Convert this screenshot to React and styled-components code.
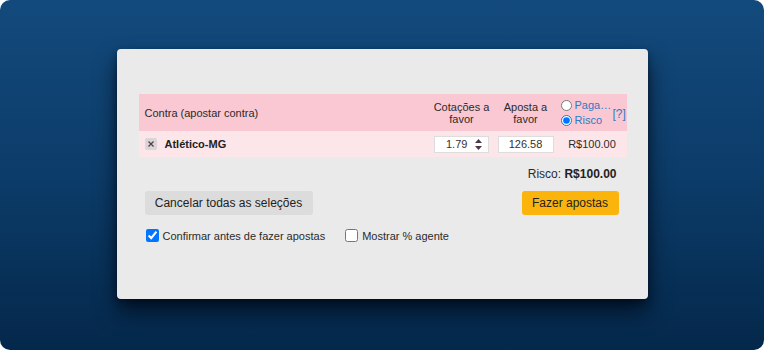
import React, { useState } from 'react';
import styled, { createGlobalStyle } from 'styled-components';

const GlobalStyle = createGlobalStyle`
  * { box-sizing: border-box; }
  html, body { margin: 0; padding: 0; background: #fff; }
  body { font-family: "Liberation Sans", Arial, sans-serif; }
`;

const Backdrop = styled.div`
  width: 764px;
  height: 350px;
  border-radius: 10px;
  background: linear-gradient(180deg, #134a7d 0%, #0c3c69 50%, #04284b 100%);
  display: flex;
  justify-content: center;
  padding-top: 49px;
`;

const Card = styled.div`
  width: 531px;
  height: 250px;
  background: #eaeaea;
  border-radius: 4px;
  box-shadow: 0 12px 22px rgba(0, 0, 10, 0.65), 0 3px 6px rgba(0, 0, 0, 0.35);
  padding: 45px 21px 0 22px;
  color: #2b2b2b;
  font-size: 11px;
`;

const Row = styled.div`
  display: flex;
  align-items: center;
  height: ${p => p.$h}px;
  background: ${p => p.$bg};
`;

const NameCell = styled.div`
  flex: 1;
  padding-left: 6px;
  display: flex;
  align-items: center;
  gap: 8px;
`;

const ColCell = styled.div`
  width: ${p => p.$w}px;
  display: flex;
  justify-content: ${p => p.$justify || 'center'};
  align-items: center;
  text-align: center;
  line-height: 12px;
  padding: ${p => p.$pad || 0};
`;

const RemoveBtn = styled.button`
  width: 12px;
  height: 12px;
  border: 0;
  border-radius: 2px;
  background: #d9d6d7;
  padding: 0;
  display: flex;
  align-items: center;
  justify-content: center;
`;

const Team = styled.span`
  font-weight: bold;
  color: #222;
`;

const InputBox = styled.div`
  width: ${p => p.$w}px;
  height: 17px;
  background: #fff;
  border: 1px solid #ddd;
  display: flex;
  align-items: center;
  justify-content: ${p => (p.$spin ? 'flex-start' : 'center')};
  padding: ${p => (p.$spin ? '0 0 0 11px' : '0')};
  color: #333;
`;

const Spinner = styled.svg`
  margin-left: auto;
  margin-right: 6px;
`;

const RadioStack = styled.div`
  display: flex;
  flex-direction: column;
  gap: 2px;
  width: 53px;
`;

const RadioLabel = styled.label`
  display: flex;
  align-items: center;
  color: #2e7bc4;
  font-size: 11px;
  line-height: 13px;
  white-space: nowrap;
  overflow: hidden;

  input {
    width: 11px;
    height: 11px;
    margin: 0 3px 0 1px;
    flex-shrink: 0;
  }

  span {
    overflow: hidden;
    text-overflow: ellipsis;
  }
`;

const Help = styled.span`
  color: #2e7bc4;
  font-size: 12px;
  margin-top: 2px;
`;

const Footer = styled.div`
  padding: 0 8px 0 6px;
`;

const RiskLine = styled.div`
  text-align: right;
  margin-top: 10px;
  padding-right: 2px;
  line-height: 14px;
  font-size: 12px;
  b { color: #222; }
`;

const ButtonRow = styled.div`
  display: flex;
  justify-content: space-between;
  margin-top: 10px;
`;

const Button = styled.button`
  height: 24px;
  border: 0;
  border-radius: 3px;
  padding: 0;
  white-space: nowrap;
  font-family: inherit;
  font-size: 12px;
  color: #222;
  background: ${p => (p.$primary ? '#fbb40b' : '#dcdcdc')};
  width: ${p => p.$w}px;
`;

const Options = styled.div`
  display: flex;
  gap: 19px;
  margin-top: 14px;
`;

const CheckLabel = styled.label`
  display: flex;
  align-items: center;
  gap: 4px;

  input {
    width: 13px;
    height: 13px;
    margin: 0 0 0 1px;
  }
`;

export default function App() {
  const [mode, setMode] = useState('risk');
  const [confirm, setConfirm] = useState(true);
  const [agent, setAgent] = useState(false);

  return (
    <>
      <GlobalStyle />
      <Backdrop>
        <Card>
          <Row $h={37} $bg="#f9c8d3">
            <NameCell>Contra (apostar contra)</NameCell>
            <ColCell $w={64}>Cotações a<br />favor</ColCell>
            <ColCell $w={64}>Aposta a<br />favor</ColCell>
            <ColCell $w={69} $pad="0 0 0 2px" $justify="flex-start">
              <RadioStack>
                <RadioLabel>
                  <input type="radio" checked={mode === 'pay'} onChange={() => setMode('pay')} />
                  <span>Pagamento</span>
                </RadioLabel>
                <RadioLabel>
                  <input type="radio" checked={mode === 'risk'} onChange={() => setMode('risk')} />
                  <span>Risco</span>
                </RadioLabel>
              </RadioStack>
              <Help>[?]</Help>
            </ColCell>
          </Row>
          <Row $h={26} $bg="#fde6ea">
            <NameCell>
              <RemoveBtn>
                <svg width="6" height="6" viewBox="0 0 6 6">
                  <path d="M0.5 0.5L5.5 5.5M5.5 0.5L0.5 5.5" stroke="#5a3a4a" strokeWidth="1.2" />
                </svg>
              </RemoveBtn>
              <Team>Atlético-MG</Team>
            </NameCell>
            <ColCell $w={64}>
              <InputBox $w={55} $spin>
                1.79
                <Spinner width="7" height="11" viewBox="0 0 7 11">
                  <path d="M3.5 0L7 4H0Z M3.5 11L7 7H0Z" fill="#4a3a48" />
                </Spinner>
              </InputBox>
            </ColCell>
            <ColCell $w={64}>
              <InputBox $w={56}>126.58</InputBox>
            </ColCell>
            <ColCell $w={69}>R$100.00</ColCell>
          </Row>
          <Footer>
            <RiskLine>
              Risco: <b>R$100.00</b>
            </RiskLine>
            <ButtonRow>
              <Button $w={168}>Cancelar todas as seleções</Button>
              <Button $primary $w={97}>Fazer apostas</Button>
            </ButtonRow>
            <Options>
              <CheckLabel>
                <input type="checkbox" checked={confirm} onChange={() => setConfirm(!confirm)} />
                Confirmar antes de fazer apostas
              </CheckLabel>
              <CheckLabel>
                <input type="checkbox" checked={agent} onChange={() => setAgent(!agent)} />
                Mostrar % agente
              </CheckLabel>
            </Options>
          </Footer>
        </Card>
      </Backdrop>
    </>
  );
}
